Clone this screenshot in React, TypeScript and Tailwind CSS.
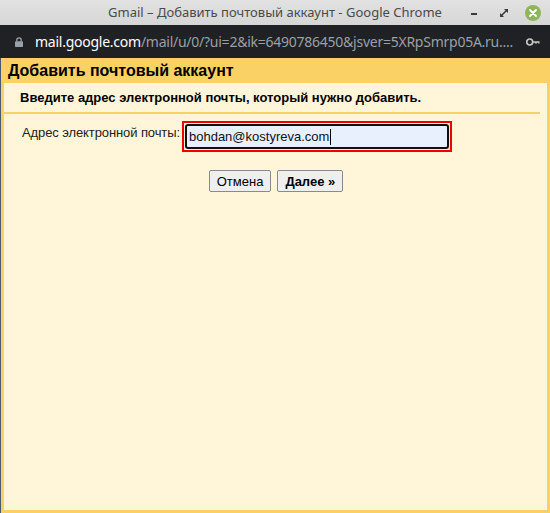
import React from "react";

export default function App() {
  return (
    <div className="w-[550px] h-[513px] overflow-hidden flex flex-col bg-[#fad165]">
      {/* Title bar */}
      <div className="h-[25px] shrink-0 relative bg-gradient-to-b from-[#e2e2e2] to-[#d6d6d6] flex items-center justify-center" style={{ fontFamily: '"Noto Sans", "DejaVu Sans", sans-serif' }}>
        <span className="text-[13px] text-[#4a4a4a] leading-none whitespace-nowrap">Gmail – Добавить почтовый аккаунт - Google Chrome</span>
        <div className="absolute right-[9px] top-[5px] flex items-center">
          <div className="w-[6px] h-[2px] bg-[#3a3a3a] mt-[1px] mr-[22px]" />
          <svg width="10" height="10" viewBox="0 0 10 10" className="mr-[16px]">
            <path d="M1 9 L1 5 L5 9 Z" fill="#3a3a3a" />
            <path d="M9 1 L9 5 L5 1 Z" fill="#3a3a3a" />
            <path d="M2.5 7.5 L7.5 2.5" stroke="#3a3a3a" strokeWidth="1.6" />
          </svg>
          <div className="w-[16px] h-[16px] rounded-full bg-[#8fb55a] flex items-center justify-center">
            <svg width="8" height="8" viewBox="0 0 8 8">
              <path d="M1 1 L7 7 M7 1 L1 7" stroke="white" strokeWidth="1.8" strokeLinecap="round" />
            </svg>
          </div>
        </div>
      </div>
      {/* Address bar */}
      <div className="h-[33px] shrink-0 bg-[#202124] flex items-center pl-[15px] pr-[10px] overflow-hidden" style={{ fontFamily: '"Noto Sans", "DejaVu Sans", sans-serif' }}>
        <svg width="8" height="10" viewBox="0 0 8 10" className="mr-[12px] shrink-0">
          <path d="M1.8 4.5 V3 a2.2 2.2 0 0 1 4.4 0 V4.5" stroke="#9aa0a6" strokeWidth="1.3" fill="none" />
          <rect x="0" y="4.3" width="8" height="5.7" rx="0.8" fill="#9aa0a6" />
        </svg>
        <span className="text-[14px] leading-none whitespace-nowrap tracking-[-0.25px] shrink-0">
          <span className="text-white">mail.google.com</span>
          <span className="text-[#9aa0a6]">/mail/u/0/?ui=2&amp;ik=6490786450&amp;jsver=5XRpSmrp05A.ru....</span>
        </span>
        <div className="flex-1" />
        <svg width="14" height="8" viewBox="0 0 15 8" className="shrink-0">
          <circle cx="4" cy="4" r="3.2" fill="none" stroke="#c4c7c5" strokeWidth="1.8" />
          <path d="M7 3.2 H14.5 V5.5 H13 V4.8 H11.5 V6 H10 V4.8 H7 Z" fill="#c4c7c5" />
        </svg>
      </div>
      {/* Page */}
      <div className="flex-1 flex flex-col border-l-[1px] border-l-[#4a5870] pl-[3px] pr-[3px] pb-[3px]" style={{ fontFamily: '"Liberation Sans", Arial, sans-serif' }}>
        <div className="h-[25px] shrink-0 flex items-center pl-[4px]">
          <span className="text-[16px] font-bold text-black">Добавить почтовый аккаунт</span>
        </div>
        <div className="flex-1 bg-[#fff6d9] flex flex-col">
          <div className="mr-[7px] border-b-[2px] border-b-[#fad165] h-[31px] flex items-center pl-[16px]">
            <span className="text-[13px] font-bold text-black">Введите адрес электронной почты, который нужно добавить.</span>
          </div>
          <div className="flex items-start pt-[7px] pl-[18px]">
            <span className="text-[13px] leading-[15px] tracking-[-0.1px] text-[#222] pt-[4px]">Адрес электронной почты:</span>
            <div className="border-[2px] border-[#ee0000] p-[1px] ml-[2px]">
              <div className="w-[264px] h-[25px] bg-[#e8f0fe] border-[2px] border-[#101010] rounded-[3px] flex items-center pl-[2px]">
                <span className="text-[13px] text-[#111]">bohdan@kostyreva.com</span>
                <span className="w-[1px] h-[16px] bg-black ml-[1px]" />
              </div>
            </div>
          </div>
          <div className="flex justify-center gap-[6px] pt-[18px] pl-[1px]">
            <button className="h-[22px] px-[7px] text-[13px] text-black bg-[#efefef] border border-[#8a8a8a] rounded-[2px] leading-none">Отмена</button>
            <button className="h-[22px] px-[7px] text-[13px] font-bold text-black bg-[#efefef] border border-[#8a8a8a] rounded-[2px] leading-none">Далее »</button>
          </div>
        </div>
      </div>
    </div>
  );
}
